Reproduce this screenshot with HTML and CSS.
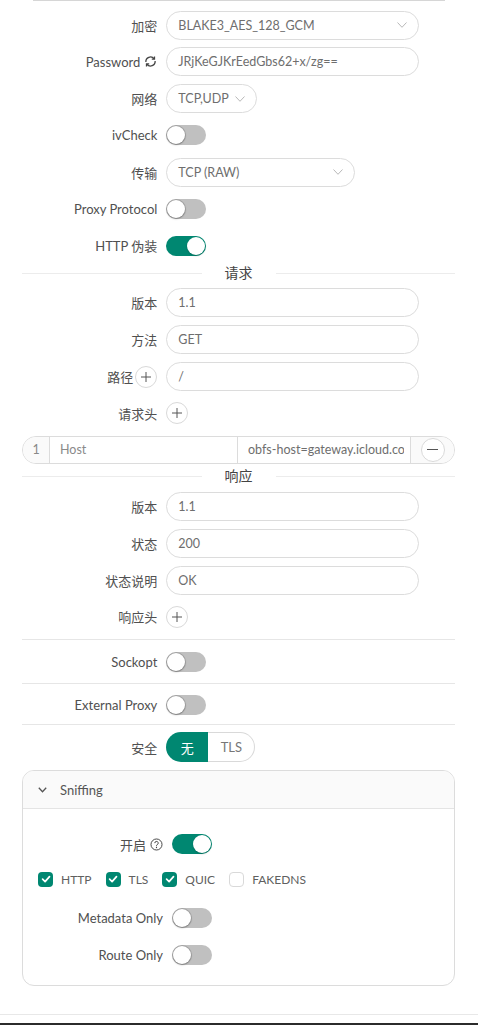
FILE: index.html
```html
<!DOCTYPE html>
<html lang="zh">
<head>
<meta charset="utf-8">
<title>Inbound</title>
<link rel="stylesheet" href="styles.css">
</head>
<body>
<div class="top-edge"></div>
<div class="form">
  <div class="row">
    <div class="label">加密</div>
    <div class="ctl"><div class="field"><span>BLAKE3_AES_128_GCM</span><svg class="chev" viewBox="0 0 10 6" width="10" height="6"><polyline points="0.5,0.5 5,5.3 9.5,0.5"/></svg></div></div>
  </div>
  <div class="row">
    <div class="label">Password <svg class="sync" viewBox="0 0 16 16" width="13" height="13"><path d="M2.3 8.6A5.7 5.7 0 0 1 12.4 4.6"/><path d="M12.9 1.8V5.1H9.6"/><path d="M13.7 7.4A5.7 5.7 0 0 1 3.6 11.4"/><path d="M3.1 14.2V10.9H6.4"/></svg></div>
    <div class="ctl"><div class="field"><span>JRjKeGJKrEedGbs62+x/zg==</span></div></div>
  </div>
  <div class="row">
    <div class="label">网络</div>
    <div class="ctl"><div class="field w-net"><span>TCP,UDP</span><svg class="chev" viewBox="0 0 10 6" width="10" height="6"><polyline points="0.5,0.5 5,5.3 9.5,0.5"/></svg></div></div>
  </div>
  <div class="row">
    <div class="label">ivCheck</div>
    <div class="ctl"><div class="switch"></div></div>
  </div>
  <div class="row">
    <div class="label">传输</div>
    <div class="ctl"><div class="field w-trans"><span>TCP (RAW)</span><svg class="chev" viewBox="0 0 10 6" width="10" height="6"><polyline points="0.5,0.5 5,5.3 9.5,0.5"/></svg></div></div>
  </div>
  <div class="row">
    <div class="label">Proxy Protocol</div>
    <div class="ctl"><div class="switch"></div></div>
  </div>
  <div class="row">
    <div class="label">HTTP 伪装</div>
    <div class="ctl"><div class="switch on"></div></div>
  </div>

  <div class="divider"><span class="line"></span><span class="dtext">请求</span><span class="line"></span></div>

  <div class="row">
    <div class="label">版本</div>
    <div class="ctl"><div class="field"><span>1.1</span></div></div>
  </div>
  <div class="row">
    <div class="label">方法</div>
    <div class="ctl"><div class="field"><span>GET</span></div></div>
  </div>
  <div class="row">
    <div class="label lbl-btn">路径<span class="circle-btn"><svg viewBox="0 0 10 10" width="10" height="10"><path d="M5 0V10M0 5H10"/></svg></span></div>
    <div class="ctl"><div class="field"><span>/</span></div></div>
  </div>
  <div class="row">
    <div class="label">请求头</div>
    <div class="ctl"><span class="circle-btn"><svg viewBox="0 0 10 10" width="10" height="10"><path d="M5 0V10M0 5H10"/></svg></span></div>
  </div>
  <div class="kv">
    <div class="kv-idx">1</div>
    <div class="kv-key">Host</div>
    <div class="kv-val"><span class="kv-text">obfs-host=gateway.icloud.com</span></div>
    <div class="kv-add"><span class="circle-btn big"><svg viewBox="0 0 10 10" width="11" height="11"><path d="M0 5H10"/></svg></span></div>
  </div>

  <div class="divider second"><span class="line"></span><span class="dtext">响应</span><span class="line"></span></div>

  <div class="row">
    <div class="label">版本</div>
    <div class="ctl"><div class="field"><span>1.1</span></div></div>
  </div>
  <div class="row">
    <div class="label">状态</div>
    <div class="ctl"><div class="field"><span>200</span></div></div>
  </div>
  <div class="row">
    <div class="label">状态说明</div>
    <div class="ctl"><div class="field"><span>OK</span></div></div>
  </div>
  <div class="row">
    <div class="label">响应头</div>
    <div class="ctl"><span class="circle-btn"><svg viewBox="0 0 10 10" width="10" height="10"><path d="M5 0V10M0 5H10"/></svg></span></div>
  </div>

  <div class="sep s1"></div>
  <div class="row r-sock">
    <div class="label">Sockopt</div>
    <div class="ctl"><div class="switch"></div></div>
  </div>
  <div class="sep s2"></div>
  <div class="row r-ext">
    <div class="label">External Proxy</div>
    <div class="ctl"><div class="switch"></div></div>
  </div>
  <div class="sep s3"></div>
  <div class="row r-sec">
    <div class="label">安全</div>
    <div class="ctl"><div class="radio"><span class="opt active">无</span><span class="opt">TLS</span></div></div>
  </div>

  <div class="panel">
    <div class="panel-head"><svg class="pchev" viewBox="0 0 9 6" width="9" height="6"><polyline points="0.8,0.8 4.5,4.8 8.2,0.8"/></svg><span>Sniffing</span></div>
    <div class="panel-body">
      <div class="row">
        <div class="label">开启 <svg class="qicon" viewBox="0 0 16 16" width="13" height="13"><circle cx="8" cy="8" r="6.8"/><path d="M5.9 6.3a2.1 2.1 0 1 1 3 1.9c-.6.3-.9.7-.9 1.3v.5"/><circle class="dot" cx="8" cy="11.7" r="0.8"/></svg></div>
        <div class="ctl"><div class="switch on"></div></div>
      </div>
      <div class="checks">
        <span class="check"><span class="box on"><svg viewBox="0 0 14 14" width="14" height="14"><polyline points="3.6,7.2 6.1,9.6 10.5,4.6"/></svg></span>HTTP</span>
        <span class="check"><span class="box on"><svg viewBox="0 0 14 14" width="14" height="14"><polyline points="3.6,7.2 6.1,9.6 10.5,4.6"/></svg></span>TLS</span>
        <span class="check"><span class="box on"><svg viewBox="0 0 14 14" width="14" height="14"><polyline points="3.6,7.2 6.1,9.6 10.5,4.6"/></svg></span>QUIC</span>
        <span class="check"><span class="box"></span>FAKEDNS</span>
      </div>
      <div class="row r-meta">
        <div class="label">Metadata Only</div>
        <div class="ctl"><div class="switch"></div></div>
      </div>
      <div class="row r-route">
        <div class="label">Route Only</div>
        <div class="ctl"><div class="switch"></div></div>
      </div>
    </div>
  </div>
</div>
<div class="footer-line"></div>
<div class="window-edge"></div>
</body>
</html>
```

FILE: styles.css
```css
html, body {
  margin: 0;
  padding: 0;
  background: #fff;
}
body {
  width: 478px;
  height: 1026px;
  overflow: hidden;
  font-family: Lato, "Noto Sans CJK SC", sans-serif;
  font-size: 13px;
  color: #555;
}

.top-edge {
  height: 1px;
  margin: 0 33px;
  background: #d6d6d6;
}

.form {
  margin: 0 23px 0 22px;
  padding-top: 9.5px;
}

.row {
  display: grid;
  grid-template-columns: 8fr 14fr 2fr;
  align-items: center;
  height: 29px;
  margin-bottom: 7.8px;
}

.label {
  grid-column: 1;
  display: flex;
  justify-content: flex-end;
  align-items: center;
  gap: 4px;
  padding-right: 9px;
  white-space: nowrap;
  color: #505050;
}
.lbl-btn { gap: 2px; }

.ctl {
  grid-column: 2;
  display: flex;
  align-items: center;
}

.field {
  box-sizing: border-box;
  width: 100%;
  height: 29px;
  border: 1px solid #dcdcdc;
  border-radius: 15px;
  padding: 0 11px;
  display: flex;
  align-items: center;
  justify-content: space-between;
  color: #6e6e6e;
  font-size: 12.5px;
  white-space: nowrap;
  overflow: hidden;
}
.w-net { width: 91px; }
.w-trans { width: 189px; }

.chev {
  fill: none;
  stroke: #b8b8b8;
  stroke-width: 1;
  flex: none;
}

.sync path {
  fill: none;
  stroke: #444;
  stroke-width: 1.6;
}

.switch {
  position: relative;
  width: 40px;
  height: 20px;
  border-radius: 10px;
  background: #c0c0c0;
}
.switch::after {
  content: "";
  position: absolute;
  top: 1px;
  left: 1px;
  width: 18px;
  height: 18px;
  border-radius: 50%;
  background: #fff;
  box-shadow: 0 0 0 1px rgba(0, 0, 0, 0.14), 0 1px 2px rgba(0, 0, 0, 0.25);
}
.switch.on { background: #008771; }
.switch.on::after { left: 21px; box-shadow: 0 1px 2px rgba(0, 0, 0, 0.2); }

.divider {
  display: flex;
  align-items: center;
  height: 10px;
  margin-bottom: 10.4px;
}
.divider.second {
  margin-top: 4.5px;
  margin-bottom: 10.5px;
}
.divider .line {
  flex: 1;
  height: 1px;
  background: #ececec;
}
.dtext {
  padding: 0 23px;
  font-size: 14px;
  line-height: 10px;
  color: #444;
}

.circle-btn {
  box-sizing: border-box;
  width: 22px;
  height: 22px;
  border: 1px solid #d9d9d9;
  border-radius: 50%;
  display: inline-flex;
  align-items: center;
  justify-content: center;
  background: #fff;
}
.circle-btn svg path {
  stroke: #555;
  stroke-width: 1;
  fill: none;
}
.circle-btn.big {
  width: 24px;
  height: 24px;
}

.kv {
  display: flex;
  box-sizing: border-box;
  height: 28px;
  border: 1px solid #dcdcdc;
  border-radius: 14px;
  overflow: hidden;
  margin-bottom: 7.8px;
  color: #6e6e6e;
  font-size: 12.5px;
}
.kv > div {
  box-sizing: border-box;
  display: flex;
  align-items: center;
  white-space: nowrap;
}
.kv-idx {
  width: 27px;
  justify-content: center;
  background: #fafafa;
  border-right: 1px solid #dcdcdc;
  color: #888;
}
.kv-key {
  width: 188px;
  padding-left: 10px;
  border-right: 1px solid #dcdcdc;
  color: #8a8a8a;
}
.kv-val {
  width: 173px;
  padding: 0 6px 0 10px;
  border-right: 1px solid #dcdcdc;
}
.kv-text {
  display: block;
  width: 100%;
  overflow: hidden;
  white-space: nowrap;
}
.kv-add {
  flex: 1;
  justify-content: center;
  background: #fafafa;
}

.sep {
  height: 1px;
  background: #e6e6e6;
}
.sep.s1 { margin-top: 0.8px; margin-bottom: 7.5px; }
.r-sock { margin-bottom: 6.5px; }
.sep.s2 { margin-bottom: 6px; }
.r-ext { margin-bottom: 5px; }
.sep.s3 { margin-bottom: 7px; }
.r-sec { height: 30px; margin-bottom: 8px; }

.radio {
  display: flex;
  height: 30px;
}
.opt {
  box-sizing: border-box;
  display: flex;
  align-items: center;
  justify-content: center;
  height: 30px;
  width: 47px;
  border: 1px solid #d9d9d9;
  border-left: none;
  border-radius: 0 15px 15px 0;
  color: #777;
}
.opt.active {
  width: 42px;
  border: none;
  border-radius: 15px 0 0 15px;
  background: #008771;
  color: #fff;
}

.panel {
  border: 1px solid #dcdcdc;
  border-radius: 12px;
  overflow: hidden;
}
.panel-head {
  height: 38px;
  box-sizing: border-box;
  background: #fafafa;
  border-bottom: 1px solid #e4e4e4;
  display: flex;
  align-items: center;
  padding-left: 15px;
  gap: 13px;
  color: #555;
}
.pchev {
  fill: none;
  stroke: #555;
  stroke-width: 1.3;
}
.panel-body {
  padding: 20.5px 16px 15.5px;
}
.panel-body .row { margin-bottom: 6px; }
.panel-body .r-meta { margin-bottom: 8px; }
.panel-body .r-route { margin-bottom: 0; }

.qicon circle {
  fill: none;
  stroke: #444;
  stroke-width: 1.2;
}
.qicon path {
  fill: none;
  stroke: #444;
  stroke-width: 1.2;
}
.qicon .dot { fill: #444; stroke: none; }

.checks {
  display: flex;
  align-items: center;
  height: 29px;
  margin: 0 0 10px -1px;
  gap: 14px;
  font-size: 12px;
}
.check {
  display: inline-flex;
  align-items: center;
  gap: 8px;
  color: #606060;
}
.box {
  box-sizing: border-box;
  width: 15px;
  height: 15px;
  border-radius: 4px;
  border: 1px solid #d9d9d9;
  background: #fff;
  display: inline-flex;
  align-items: center;
  justify-content: center;
}
.box.on {
  border: none;
  background: #008771;
}
.box svg polyline {
  fill: none;
  stroke: #fff;
  stroke-width: 1.7;
  stroke-linecap: round;
  stroke-linejoin: round;
}

.footer-line {
  height: 1px;
  margin-top: 28px;
  background: #e8e8e8;
}
.window-edge {
  height: 2px;
  margin-top: 8px;
  background: #2b2b2b;
}
```
